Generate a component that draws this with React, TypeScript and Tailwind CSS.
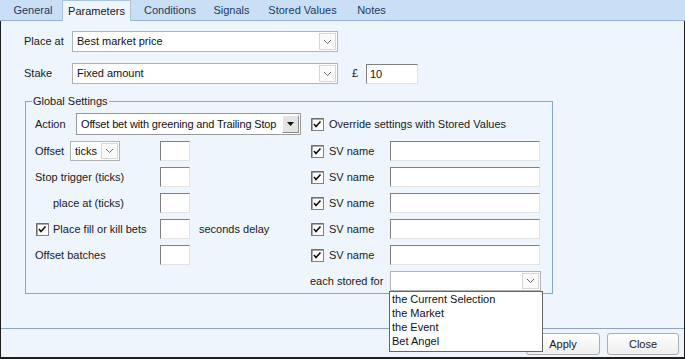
import React from 'react';

const FONT = { fontFamily: '"Liberation Sans", Arial, sans-serif' };

const tabs = [
  { name: 'General', w: 'w-[58px]' },
  { name: 'Parameters', w: 'w-[69px]', active: true },
  { name: 'Conditions', w: 'w-[78px]' },
  { name: 'Signals', w: 'w-[45px]' },
  { name: 'Stored Values', w: 'w-[97px]' },
  { name: 'Notes', w: 'w-[41px]' },
];

const Check = () => (
  <svg width="13" height="13" viewBox="0 0 13 13" className="shrink-0">
    <rect x="0.5" y="0.5" width="12" height="12" fill="#fff" stroke="#808080" />
    <path d="M1 1 H12 M1 1 V12" stroke="#5a5a5a" />
    <polyline points="3,6 5,8.5 9.5,3.5" fill="none" stroke="#111" strokeWidth="1.6" />
  </svg>
);

const Chevron = () => (
  <svg width="9" height="6" viewBox="0 0 9 6">
    <polyline points="1,1 4.5,4.5 8,1" fill="none" stroke="#6b6b6b" strokeWidth="1" />
  </svg>
);

// flat windows-10 style combo box
const Combo = ({ text, className }: { text?: string; className: string }) => (
  <div className={`flex items-center bg-white border border-[#b3b3b3] ${className}`}>
    <span className="flex-1 pl-[4px] text-[11px] leading-[13px] text-[#111] whitespace-nowrap">{text}</span>
    <div className="w-[17px] h-[calc(100%-2px)] mr-[1px] border border-[#d6d6d6] bg-[#fafafa] flex items-center justify-center">
      <Chevron />
    </div>
  </div>
);

// sunken classic text box
const Box = ({ className, value }: { className: string; value?: string }) => (
  <div
    className={`bg-white border-t border-l border-t-[#7f7f7f] border-l-[#7f7f7f] border-b border-r border-b-[#e3e3e3] border-r-[#e3e3e3] text-[11px] leading-[18px] pl-[3px] text-[#111] ${className}`}
  >
    {value}
  </div>
);

const Label = ({ children, className = '' }: { children: React.ReactNode; className?: string }) => (
  <span className={`text-[11px] leading-[13px] text-[#1a1a1a] whitespace-nowrap ${className}`}>{children}</span>
);

const SvRow = () => (
  <div className="flex items-center">
    <Check />
    <Label className="ml-[5px] w-[61px]">SV name</Label>
    <Box className="w-[150px] h-[20px]" />
  </div>
);

export default function App() {
  return (
    <div style={FONT} className="w-[685px] h-[359px] relative bg-[#eef5fd] overflow-hidden">
      {/* tab strip */}
      <div className="h-[21px] bg-[#cadff6] border-b border-[#93b1d3] flex items-end pl-[4px]">
        {tabs.map(t =>
          t.active ? (
            <div
              key={t.name}
              className={`${t.w} h-[21px] -mb-px bg-[#eef5fd] border-l border-r border-t border-[#a9c2de] flex items-center justify-center text-[11px] text-[#202020]`}
            >
              {t.name}
            </div>
          ) : (
            <div key={t.name} className={`${t.w} h-[20px] flex items-center justify-center text-[11px] text-[#1d3a62] whitespace-nowrap`}>
              {t.name}
            </div>
          )
        )}
      </div>

      <div className="h-[338px] border-l border-r border-b-2 border-[#1e1e1e] flex flex-col">
        {/* page content */}
        <div className="h-[307px] pt-[10px] pl-[23px] flex flex-col">
          <div className="flex items-center">
            <Label className="w-[48px]">Place at</Label>
            <Combo text="Best market price" className="w-[266px] h-[21px]" />
          </div>
          <div className="flex items-center mt-[11px]">
            <Label className="w-[48px]">Stake</Label>
            <Combo text="Fixed amount" className="w-[266px] h-[21px]" />
            <Label className="ml-[14px] w-[14px]">£</Label>
            <Box className="w-[52px] h-[20px]" value="10" />
          </div>

          {/* Global Settings group */}
          <div className="relative mt-[17px] ml-[1px] w-[528px] h-[193px] border border-[#87a8c9] pt-[11px] pl-[9px]">
            <span className="absolute -top-[7px] left-[6px] px-[1px] bg-[#eef5fd] text-[11px] leading-[13px] text-[#1a1a1a]">
              Global Settings
            </span>

            <div className="flex items-center h-[22px]">
              <div className="w-[276px] flex items-center">
                <Label className="w-[41px]">Action</Label>
                <div className="w-[225px] h-[22px] bg-white border border-[#9a9a9a] flex items-center">
                  <span className="flex-1 pl-[4px] text-[11px] tracking-[-0.15px] text-[#111] whitespace-nowrap">Offset bet with greening and Trailing Stop</span>
                  <div className="w-[17px] h-[18px] mr-[1px] bg-[#e4e4e4] border-t border-l border-white border-b border-r border-b-[#8a8a8a] border-r-[#8a8a8a] flex items-center justify-center">
                    <svg width="7" height="4" viewBox="0 0 7 4">
                      <polygon points="0,0 7,0 3.5,4" fill="#111" />
                    </svg>
                  </div>
                </div>
              </div>
              <Check />
              <Label className="ml-[5px]">Override settings with Stored Values</Label>
            </div>

            <div className="flex flex-col gap-[6px] mt-[6px]">
              <div className="flex items-center h-[20px]">
                <div className="w-[276px] flex items-center">
                  <Label className="w-[35px]">Offset</Label>
                  <Combo text="ticks" className="w-[50px] h-[20px]" />
                  <Box className="ml-[40px] w-[30px] h-[20px]" />
                </div>
                <SvRow />
              </div>
              <div className="flex items-center h-[20px]">
                <div className="w-[276px] flex items-center">
                  <Label className="w-[125px]">Stop trigger (ticks)</Label>
                  <Box className="w-[30px] h-[20px]" />
                </div>
                <SvRow />
              </div>
              <div className="flex items-center h-[20px]">
                <div className="w-[276px] flex items-center">
                  <Label className="w-[125px] pl-[18px]">place at (ticks)</Label>
                  <Box className="w-[30px] h-[20px]" />
                </div>
                <SvRow />
              </div>
              <div className="flex items-center h-[20px]">
                <div className="w-[276px] flex items-center">
                  <div className="w-[125px] flex items-center pl-[1px]">
                    <Check />
                    <Label className="ml-[4px]">Place fill or kill bets</Label>
                  </div>
                  <Box className="w-[30px] h-[20px]" />
                  <Label className="ml-[9px]">seconds delay</Label>
                </div>
                <SvRow />
              </div>
              <div className="flex items-center h-[20px]">
                <div className="w-[276px] flex items-center">
                  <Label className="w-[125px]">Offset batches</Label>
                  <Box className="w-[30px] h-[20px]" />
                </div>
                <SvRow />
              </div>
              <div className="flex items-center h-[20px]">
                <div className="w-[275px]" />
                <Label className="w-[80px]">each stored for</Label>
                <Combo className="w-[151px] h-[20px]" />
              </div>
            </div>
          </div>
        </div>

        {/* button bar */}
        <div className="flex-1 border-t border-[#8ea3bd] flex justify-end items-start pt-[4px] pr-[5px] gap-[7px]">
          <button className="w-[74px] h-[22px] rounded-[3px] border border-[#adadad] bg-gradient-to-b from-[#ffffff] to-[#eeeeee] text-[11px] text-[#1a1a1a]">
            Apply
          </button>
          <button className="w-[72px] h-[22px] rounded-[3px] border border-[#adadad] bg-gradient-to-b from-[#ffffff] to-[#eeeeee] text-[11px] text-[#1a1a1a]">
            Close
          </button>
        </div>
      </div>

      {/* open drop-down list */}
      <div className="absolute left-[389px] top-[291px] w-[154px] h-[61px] bg-white border border-[#646464] pl-[2px] flex flex-col text-[11px] leading-[14px] text-[#111]">
        <span>the Current Selection</span>
        <span>the Market</span>
        <span>the Event</span>
        <span>Bet Angel</span>
      </div>
    </div>
  );
}
